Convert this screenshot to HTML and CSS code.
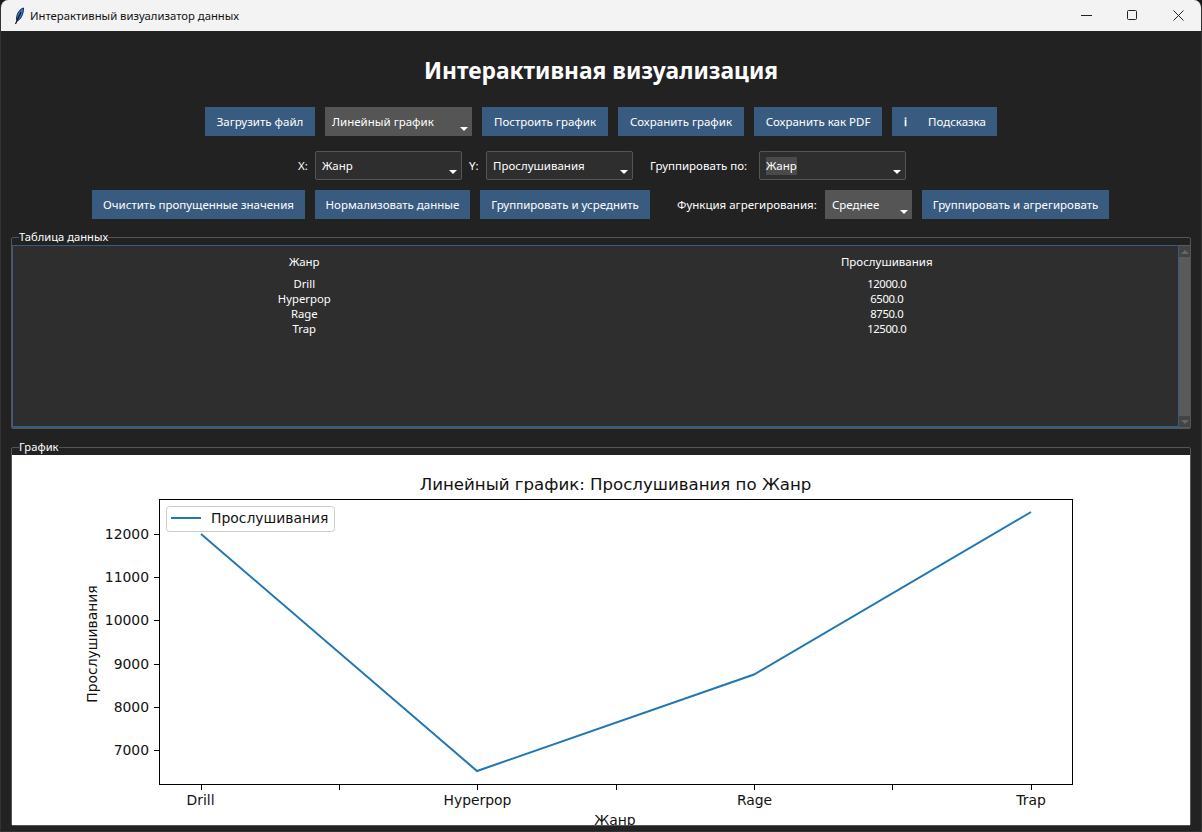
FILE: index.html
```html
<!DOCTYPE html>
<html lang="ru">
<head>
    <meta charset="UTF-8">
    <meta name="viewport" content="width=device-width, initial-scale=1.0">
    <title>Интерактивный визуализатор данных</title>
    <link rel="stylesheet" href="styles.css">
</head>
<body>
    <div class="window">
        <div class="titlebar">
            <svg class="app-icon" width="16" height="20" viewBox="0 0 16 20">
                <path d="M12.5 2 C9 3 6 7 5.5 12 L6 15 C10 13.5 12.5 8 12.5 2 Z" fill="#3d78d8" stroke="#10254a" stroke-width="1"/>
                <path d="M10 6 L4.5 18" stroke="#111" stroke-width="1.2" fill="none"/>
            </svg>
            <span class="window-title">Интерактивный визуализатор данных</span>
            <div class="window-controls">
                <svg class="control" width="46" height="31" viewBox="0 0 46 31"><path d="M18 15.5 H29" stroke="#222" fill="none"/></svg>
                <svg class="control" width="46" height="31" viewBox="0 0 46 31"><rect x="18.5" y="10.5" width="9" height="9" rx="1" stroke="#222" fill="none"/></svg>
                <svg class="control" width="46" height="31" viewBox="0 0 46 31"><path d="M18.5 10.5 L28.5 20.5 M28.5 10.5 L18.5 20.5" stroke="#222" fill="none"/></svg>
            </div>
        </div>

        <div class="main">
            <h1>Интерактивная визуализация</h1>

            <div class="toolbar toolbar-first">
                <button class="btn w-110">Загрузить файл</button>
                <div class="dropdown w-147">Линейный график</div>
                <button class="btn w-126">Построить график</button>
                <button class="btn w-126">Сохранить график</button>
                <button class="btn w-128">Сохранить как PDF</button>
                <button class="btn btn-help w-105"><span class="help-icon">ℹ</span><span>Подсказка</span></button>
            </div>

            <div class="toolbar toolbar-second">
                <label class="field-label w-10">X:</label>
                <div class="combo w-147"><span>Жанр</span></div>
                <label class="field-label w-10">Y:</label>
                <div class="combo w-147"><span>Прослушивания</span></div>
                <label class="field-label group-label w-97">Группировать по:</label>
                <div class="combo w-147"><span class="selected">Жанр</span></div>
            </div>

            <div class="toolbar toolbar-third">
                <button class="btn w-213">Очистить пропущенные значения</button>
                <button class="btn w-155">Нормализовать данные</button>
                <button class="btn w-170">Группировать и усреднить</button>
                <label class="field-label agg-label w-136">Функция агрегирования:</label>
                <div class="dropdown w-87">Среднее</div>
                <button class="btn w-187">Группировать и агрегировать</button>
            </div>

            <fieldset class="group table-group">
                <legend>Таблица данных</legend>
                <div class="table-wrap">
                    <div class="tree">
                        <table>
                            <thead>
                                <tr><th>Жанр</th><th>Прослушивания</th></tr>
                            </thead>
                            <tbody>
                                <tr><td>Drill</td><td class="num">12000.0</td></tr>
                                <tr><td>Hyperpop</td><td class="num">6500.0</td></tr>
                                <tr><td>Rage</td><td class="num">8750.0</td></tr>
                                <tr><td>Trap</td><td class="num">12500.0</td></tr>
                            </tbody>
                        </table>
                    </div>
                    <div class="scrollbar">
                        <div class="scroll-btn"><span class="arrow-up"></span></div>
                        <div class="scroll-btn"><span class="arrow-down"></span></div>
                    </div>
                </div>
            </fieldset>

            <fieldset class="group chart-group">
                <legend>График</legend>
                <svg class="chart" width="1178" height="370" viewBox="12 455 1178 370">
                    <text class="chart-title" x="615.5" y="490">Линейный график: Прослушивания по Жанр</text>
                    <rect class="axes" x="159.5" y="499.5" width="913" height="285"/>
                    <polyline class="series" points="201,534 477,771 754,674.5 1031,512"/>

                    <path class="tick" d="M154 534.5H159 M154 577.5H159 M154 620.5H159 M154 664.5H159 M154 707.5H159 M154 750.5H159"/>
                    <path class="tick" d="M201.5 785V790 M339.5 785V790 M477.5 785V790 M616.5 785V790 M754.5 785V790 M892.5 785V790 M1031.5 785V790"/>

                    <text class="tick-y" x="149" y="539">12000</text>
                    <text class="tick-y" x="149" y="582">11000</text>
                    <text class="tick-y" x="149" y="625">10000</text>
                    <text class="tick-y" x="149" y="669">9000</text>
                    <text class="tick-y" x="149" y="712">8000</text>
                    <text class="tick-y" x="149" y="755">7000</text>

                    <text class="tick-x" x="200.5" y="805">Drill</text>
                    <text class="tick-x" x="477.5" y="805">Hyperpop</text>
                    <text class="tick-x" x="754.5" y="805">Rage</text>
                    <text class="tick-x" x="1031" y="805">Trap</text>

                    <text class="axis-label" x="615" y="825">Жанр</text>
                    <text class="axis-label" transform="translate(97 644) rotate(-90)">Прослушивания</text>

                    <rect class="legend-box" x="166.5" y="506.5" width="168" height="25" rx="3"/>
                    <path class="series" d="M171 518H201"/>
                    <text class="legend-text" x="211" y="523">Прослушивания</text>
                </svg>
            </fieldset>
        </div>
    </div>
</body>
</html>
```

FILE: styles.css
```css
* {
    box-sizing: border-box;
}
html, body {
    margin: 0;
    height: 100%;
    overflow: hidden;
    background: #1a1a1a;
}
body {
    font-family: "Noto Sans", "Open Sans", Arial, sans-serif;
    font-size: 11.5px;
    color: #fff;
}
.window {
    height: 832px;
    border: 1px solid #333;
    border-top: none;
    border-radius: 8px 8px 0 0;
    overflow: hidden;
    background: #222;
}
.titlebar {
    display: flex;
    align-items: center;
    height: 31px;
    padding-left: 10px;
    background: #f3f3f3;
    color: #111;
}
.app-icon {
    margin-right: 3px;
}
.window-title {
    font-size: 11.3px;
}
.window-controls {
    display: flex;
    margin-left: auto;
}
.main {
    display: flex;
    flex-direction: column;
    height: 801px;
    padding: 0 10px;
}
h1 {
    margin: 25px 0 21px;
    height: 30px;
    font-size: 22.8px;
    line-height: 30px;
    font-weight: bold;
    text-align: center;
}
.toolbar {
    display: flex;
    justify-content: center;
    align-items: center;
    gap: 10px;
    height: 29px;
}
.toolbar-first {
    margin-bottom: 15px;
}
.toolbar-second {
    gap: 7px;
    margin-bottom: 10px;
    padding-left: 2px;
}
.toolbar-third {
    margin-bottom: 10px;
    padding-right: 1px;
}
.btn {
    height: 29px;
    padding: 0;
    border: none;
    background: #3a5b80;
    color: #fff;
    font: inherit;
    cursor: pointer;
}
.btn-help {
    display: flex;
    align-items: center;
    padding-left: 12px;
}
.help-icon {
    width: 24px;
    font-family: "DejaVu Serif", serif;
    font-weight: bold;
    text-align: left;
}
.dropdown {
    position: relative;
    height: 29px;
    padding: 0 7px;
    background: #555;
    line-height: 29px;
}
.combo {
    position: relative;
    height: 29px;
    padding: 0 6px;
    border: 1px solid #555;
    border-radius: 2px;
    background: #2e2e2e;
    line-height: 27px;
}
.dropdown::after, .combo::after {
    content: "";
    position: absolute;
    right: 4px;
    bottom: 5px;
    border-left: 4px solid transparent;
    border-right: 4px solid transparent;
    border-top: 4px solid #fff;
}
.selected {
    display: inline-block;
    height: 18px;
    line-height: 17px;
    background: #4a4a4a;
}
.field-label {
    white-space: nowrap;
}
.group-label {
    margin-left: 10px;
    margin-right: 5px;
}
.agg-label {
    margin-left: 17px;
    margin-right: 2px;
}
.w-10 { width: 10px; }
.w-87 { width: 87px; }
.w-97 { width: 97px; }
.w-105 { width: 105px; }
.w-110 { width: 110px; }
.w-126 { width: 126px; }
.w-128 { width: 128px; }
.w-136 { width: 136px; }
.w-147 { width: 147px; }
.w-155 { width: 155px; }
.w-170 { width: 170px; }
.w-187 { width: 187px; }
.w-213 { width: 213px; }

.group {
    margin: 0;
    padding: 0;
    min-width: 0;
    border: 1px solid #555;
    border-radius: 2px;
}
.group legend {
    margin-left: 7px;
    padding: 0;
    height: 16px;
    font-size: 11.2px;
    line-height: 16px;
}
.table-group {
    height: 200px;
    margin-bottom: 10px;
}
.table-wrap {
    display: flex;
    height: 183px;
}
.tree {
    flex: 1;
    border: 1px solid #3a5b80;
    border-bottom-width: 2px;
    background: #2e2e2e;
}
.tree table {
    width: 100%;
    table-layout: fixed;
    border-collapse: collapse;
}
.tree th {
    height: 30px;
    padding: 0;
    font-weight: normal;
}
.tree td {
    height: 15px;
    padding: 0;
    font-size: 11.3px;
    line-height: 15px;
    text-align: center;
}
.tree td.num {
    letter-spacing: -0.4px;
}
.scrollbar {
    display: flex;
    flex-direction: column;
    justify-content: space-between;
    width: 11px;
    padding: 1px 0;
    background: #5a5a5a;
}
.scroll-btn {
    display: flex;
    justify-content: center;
    align-items: center;
    height: 11px;
    background: #444;
}
.arrow-up, .arrow-down {
    border-left: 4px solid transparent;
    border-right: 4px solid transparent;
}
.arrow-up {
    border-bottom: 4px solid #666;
}
.arrow-down {
    border-top: 4px solid #666;
}
.chart-group {
    height: 387px;
}
.chart {
    display: block;
    background: #fff;
}
.chart text {
    font-family: "DejaVu Sans", sans-serif;
    fill: #111;
}
.chart .chart-title {
    font-size: 16.6px;
    text-anchor: middle;
}
.axes {
    fill: none;
    stroke: #000;
    stroke-width: 1;
}
.series {
    fill: none;
    stroke: #1f77b4;
    stroke-width: 2;
}
.tick {
    fill: none;
    stroke: #000;
    stroke-width: 1;
}
.chart .tick-y {
    font-size: 13.9px;
    text-anchor: end;
}
.chart .tick-x, .chart .axis-label {
    font-size: 13.9px;
    text-anchor: middle;
}
.chart .legend-text {
    font-size: 13.9px;
}
.legend-box {
    fill: #fff;
    fill-opacity: 0.8;
    stroke: #ccc;
}
```
